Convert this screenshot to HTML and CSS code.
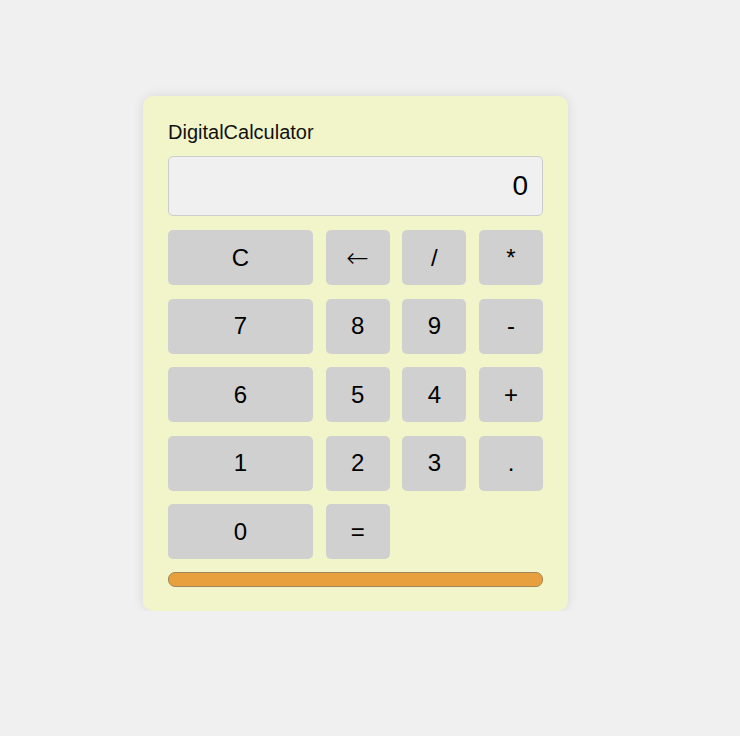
FILE: index.html
```html
<!DOCTYPE html>
<html>
<head>
<meta charset="utf-8">
<link rel="stylesheet" href="styles.css">
</head>
<body>
<div class="calc">
  <div class="title">DigitalCalculator</div>
  <div class="display">0</div>
  <div class="keys">
    <button class="key">C</button>
    <button class="key key-arrow">&larr;</button>
    <button class="key">/</button>
    <button class="key">*</button>
    <button class="key">7</button>
    <button class="key">8</button>
    <button class="key">9</button>
    <button class="key">-</button>
    <button class="key">6</button>
    <button class="key">5</button>
    <button class="key">4</button>
    <button class="key">+</button>
    <button class="key">1</button>
    <button class="key">2</button>
    <button class="key">3</button>
    <button class="key">.</button>
    <button class="key">0</button>
    <button class="key">=</button>
  </div>
  <div class="bar"></div>
</div>
</body>
</html>
```
FILE: styles.css
```css
html, body {
  margin: 0;
  padding: 0;
  background: #f0f0f0;
  font-family: "Liberation Sans", Arial, sans-serif;
}
body {
  padding: 96px 0 0 143px;
}
.calc {
  width: 375px;
  padding: 25px 25px 24px 25px;
  background: #f2f5ca;
  border-radius: 10px;
  box-shadow: 0 0 12px rgba(0, 0, 0, 0.1);
}
.title {
  font-size: 20px;
  line-height: 23px;
  color: #111;
  margin-bottom: 12px;
}
.display {
  box-sizing: border-box;
  height: 60px;
  background: #f0f0f0;
  border: 1px solid #cccccc;
  border-radius: 5px;
  font-size: 28px;
  line-height: 58px;
  text-align: right;
  padding-right: 14px;
  color: #000;
}
.keys {
  margin-top: 14px;
  display: grid;
  grid-template-columns: 145px 64px 64px 64px;
  justify-content: space-between;
  grid-auto-rows: 55px;
  row-gap: 13.5px;
}
.key {
  border: none;
  border-radius: 5px;
  background: #d0d0d0;
  font-family: "Liberation Sans", Arial, sans-serif;
  font-size: 24px;
  color: #000;
  padding: 0;
  margin: 0;
}
.key-arrow {
  font-family: "DejaVu Sans", sans-serif;
  font-size: 27px;
  font-weight: 200;
}
.bar {
  box-sizing: border-box;
  margin-top: 13px;
  height: 15px;
  background: #e8a03e;
  border: 1px solid #a0875a;
  border-radius: 7px;
}
```
